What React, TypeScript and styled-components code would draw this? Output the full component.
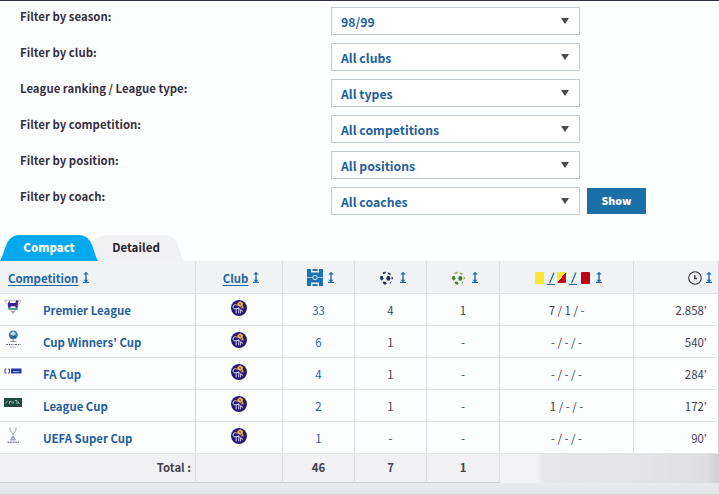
import styled, { createGlobalStyle, css } from "styled-components";

const GlobalStyle = createGlobalStyle`
  * {
    box-sizing: border-box;
  }
  body {
    margin: 0;
    background: #fdfeff;
    font-family: "Noto Sans CJK SC", "Noto Sans CJK JP", "Open Sans", sans-serif;
    font-size: 11.4px;
    color: #443f4e;
    overflow: hidden;
  }
`;

const Page = styled.div`
  width: 719px;
  height: 495px;
  border-top: 1px solid #33303f;
  background: #fdfeff;
  overflow: hidden;
`;

const Filters = styled.form`
  height: 234px;
  padding: 6px 0 0 20px;
`;

const FilterRow = styled.div`
  display: flex;
  height: 36px;
`;

const Label = styled.label`
  width: 311px;
  height: 18px;
  line-height: 18px;
  color: #35303f;
  font-size: 11.4px;
  font-weight: 700;
  white-space: nowrap;
`;

const Select = styled.div`
  display: flex;
  align-items: center;
  justify-content: space-between;
  width: 249px;
  height: 28px;
  padding: 1px 10px 0 9px;
  border: 1px solid #c3cdd5;
  background: #fff;
  color: #1d5f9e;
  font-size: 12.25px;
  font-weight: 700;
  line-height: 26px;
`;

const Arrow = styled.span`
  width: 0;
  height: 0;
  margin-top: -2px;
  border: 4px solid transparent;
  border-top: 6px solid #4a464c;
  border-bottom: 0;
`;

const ShowButton = styled.button`
  width: 59px;
  height: 26px;
  margin: 1px 0 0 7px;
  padding: 0 0 1px;
  border: 0;
  background: #1a70a6;
  color: #fff;
  font: 900 10.6px/26px "Noto Sans CJK SC", sans-serif;
`;

const Tabs = styled.div`
  display: flex;
  height: 26px;
`;

const Tab = styled.div<{ $active?: boolean }>`
  height: 26px;
  font-size: 11.6px;
  font-weight: 700;
  line-height: 25px;
  text-align: center;
  ${({ $active }) =>
    $active
      ? css`
          z-index: 1;
          width: 98px;
          background: #02a9ef;
          color: #fff;
          font-size: 11.4px;
          font-weight: 900;
          clip-path: path("M0 26C4 19 5 10 9 5Q13 0 19 0H79Q86 0 90 6C94 12 94 19 98 26Z");
        `
      : css`
          width: 96px;
          margin-left: -10px;
          background: #f1f1f3;
          color: #28242e;
          clip-path: path("M0 26V10Q9 0 19 0H76Q84 0 88 6C92 12 92 20 96 26Z");
        `}
`;

const Table = styled.div`
  border-bottom: 1px solid #c9cfd5;
`;

const rowTones = {
  head: css`
    height: 33px;
    background: #f1f2f4;
    border-bottom: 1px solid #dfe1e5;
  `,
  body: css`
    height: 32px;
    background: #fdfeff;
    border-bottom: 1px solid #e1e4e9;
  `,
  total: css`
    height: 28px;
    background: #f1f1f3;
    font-weight: 700;
    color: #45414d;
  `,
};

const Row = styled.div<{ $tone: keyof typeof rowTones }>`
  display: grid;
  grid-template-columns: 196px 87px 72px 72px 73px 134px 85px;
  ${({ $tone }) => rowTones[$tone]}
`;

const Cell = styled.div<{ $align?: "start" | "end"; $link?: boolean }>`
  display: flex;
  align-items: center;
  justify-content: ${({ $align }) => $align ?? "center"};
  border-right: 1px solid #d9dde4;
  white-space: nowrap;
  ${({ $link }) => $link && "color: #1d5f9e;"}
  ${({ $align }) => $align === "end" && "padding-right: 4px;"}
  &:last-child {
    padding-right: 11px;
    border-right-color: #d8cdd3;
  }
`;

const BadgeCell = styled(Cell)`
  padding-bottom: 4px;
`;

const TotalCell = styled(Cell)`
  padding-bottom: 3px;
`;

const HeadCell = styled(Cell)<{ $gap?: number }>`
  gap: ${({ $gap }) => $gap ?? 5}px;
  padding-top: 1px;
  padding-left: ${({ $align }) => ($align === "start" ? 8 : 4)}px;
  color: #1d65a6;
  font-weight: 700;
  &:last-child {
    padding-right: 6px;
  }
`;

const SortLink = styled.span`
  line-height: 16px;
  text-decoration: underline;
  text-decoration-thickness: 1px;
  text-underline-offset: 2px;
  text-decoration-skip-ink: none;
`;

const CrestSlot = styled.div`
  width: 43px;
  height: 31px;
  padding: 4px 0 0 4px;
`;

const CompName = styled.span`
  color: #1d5f9e;
  font-weight: 700;
`;

const Smear = styled(Cell)`
  grid-column: 6 / 8;
  height: 29px;
  border: 0;
  background: linear-gradient(90deg, #f3f3f5 0 37px, #e7e7e9 43px, #e4e4e6 130px, #e0e0e2 190px, #dddddf 208px, #cfcfd2 219px);
`;

const Bottom = styled.div`
  height: 12px;
  background: linear-gradient(#e9eaed, #e5e6e9);
  border-bottom: 1px solid #d3d6db;
`;

const Cards = styled.div`
  display: flex;
  align-items: center;
`;

const SlashIcon = styled.svg`
  margin: 2px 1px 0 3px;
`;

const Card = styled.span<{ $fill: string }>`
  width: 9px;
  height: 12px;
  border-radius: 1px;
  background: ${({ $fill }) => $fill};
`;

const SecondCard = styled(Card)`
  height: 11px;
`;

const RedCard = styled(Card)`
  margin-left: 2px;
`;

const Slash = () => (
  <SlashIcon width="9" height="13" viewBox="0 0 9 13" fill="none" stroke="#1d65a6">
    <path d="M2.5 11.5L7 .5M0 12.5h8" strokeWidth="1.2" />
  </SlashIcon>
);

const SortIcon = () => (
  <svg width="6" height="11" viewBox="0 0 6 11">
    <path d="M3 .5v10M0 10.4h6" fill="none" stroke="#1d6cb0" strokeWidth="1.4" />
    <path d="M3 0l2.8 2.5H.2zM3 10l2.6-2.3H.4z" fill="#1d6cb0" />
  </svg>
);

const PitchIcon = () => (
  <svg width="16" height="17" viewBox="0 0 16 17">
    <path fill="#1a73b2" d="M0 0h4v3.5h8V0h4v17h-4v-3.5H4V17H0z" />
    <path fill="#1a73b2" d="M5.5 0h5v2h-5zM5.5 15h5v2h-5z" />
    <path d="M0 8.5h16" stroke="#b9d6ea" strokeWidth=".8" />
    <circle cx="8" cy="8.5" r="2.2" fill="#1a73b2" stroke="#dceaf4" />
  </svg>
);

const BallIcon = ({ main, side }: { main: string; side: string }) => (
  <svg width="13" height="14" viewBox="0 0 13 14">
    <path fill={side} d="M2.6 1.6L6 .6l-.6 1.8-2.4.8zM7.8 1.2l3 1.4-.2 1.5-2.6-1.2z" />
    <path fill={main} d="M.3 5.3L2.7 5l.9 2.8-1.9 2L.1 8zM7 5.2l2.4-.2 1.2 2.2-1.2 2.6-2.4-.4-.8-2z" />
    <path fill={side} d="M12 5l.9 2.2-1 1.8-.4-2z" />
    <path fill={main} d="M2.6 10.8l3-.1 1.2 2-1.6 1-1.8-.8zM9.3 12.2l2.1-1.9-.6 2.2z" />
  </svg>
);

const ClockIcon = () => (
  <svg width="14" height="14" viewBox="0 0 14 14" fill="none" stroke="#35323a">
    <circle cx="7" cy="7" r="6.3" strokeWidth="1.1" />
    <path d="M6.8 4v3.5H9" strokeWidth="1.3" />
  </svg>
);

const ClubBadge = () => (
  <svg width="16" height="16" viewBox="0 0 16 16">
    <circle cx="8" cy="8" r="8" fill="#261b78" />
    <path d="M6 4l1.5-2 2.3-.8L12 3l-.2 2.2.9 3.3-2.3-.3L9 6.4l-2.6-.3z" fill="#d3ad4b" />
    <path d="M5.8 5C3.8 4 1.8 5.2 2 7.2c.2 1.7 1.8 1.9 2.9 1.4M5.2 13.3V8.5h2.6v5M7 7.5l2.6 2.4v3.4M9.8 9.5l2.2 2.2" fill="none" stroke="#d9d2e8" />
    <path d="M8.3 3.5l1.5 1M9.5 6l1.3 1" stroke="#6b5335" />
  </svg>
);

const PremierCrest = () => (
  <svg width="18" height="17" viewBox="0 -1 18 17">
    <path d="M.7 1.3h16.6L9 14.6z" fill="#fff" stroke="#c2b9cd" />
    <path d="M4 4l1.8-2.5V4h5.5l1-3L15 2.5l-1.3 1.3v4.9h-2L11 7.2H7l-.8 1.5H4.2z" fill="#3b2393" />
    <path d="M3.8 9h10.5l-1.2 2H5z" fill="#4d9d9a" />
    <path d="M6.5 12h5L9 14.5z" fill="#b29cac" />
  </svg>
);

const WinnersCrest = () => (
  <svg width="18" height="19" viewBox="0 0 18 19">
    <circle cx="9.3" cy="5" r="4.5" fill="#3f7fa6" />
    <path d="M6.5 3l3-1.5L12 4 9.5 5.5 7 4.7z" fill="#c6e1e9" />
    <path d="M7 7.5l3-1 2 1" stroke="#22486f" fill="none" />
    <path d="M9.3 9.5v2M6.5 11.5h6" stroke="#8e93a6" />
    <path d="M2 14.5h14.5" stroke="#6b6880" strokeWidth="1.2" strokeDasharray="2 1 1 .5" />
    <path d="M6 17h6" stroke="#b9b8c4" />
  </svg>
);

const FaCrest = () => (
  <svg width="18" height="7" viewBox="0 0 18 7">
    <path d="M2.5 1H1v4h1.5M4 1h1.5v4H4" stroke="#4140a4" fill="none" />
    <path d="M7 .5h10.5v5H7z" fill="#2735a0" />
    <path d="M9 3.7h6" stroke="#a9b0df" />
  </svg>
);

const LeagueCrest = () => (
  <svg width="18" height="9" viewBox="0 0 18 9">
    <path d="M0 0h18v9H0z" fill="#204a42" />
    <path d="M1.5 5l2-1.5M5 6l1-3 2 1.5M9 3v3M11 2.5h2V6M14 4l1.5 2" stroke="#a8beb5" fill="none" />
  </svg>
);

const SuperCrest = () => (
  <svg width="18" height="18" viewBox="0 -1 18 18" fill="none">
    <path d="M6.2.5C5.6 3 7 5 8.6 6.3M12 .5C12.5 3 11 5 9.6 6.3" stroke="#a5a5b3" />
    <path d="M9 6v5M7.5 11c0-2 3-2 3 0l1 2h-5z" fill="#b5bdd1" stroke="#9aa0b5" />
    <path d="M3.5 15.2h11.5" stroke="#53546f" strokeDasharray="2 .6" />
  </svg>
);

const filters = [
  { label: "Filter by season:", value: "98/99" },
  { label: "Filter by club:", value: "All clubs" },
  { label: "League ranking / League type:", value: "All types" },
  { label: "Filter by competition:", value: "All competitions" },
  { label: "Filter by position:", value: "All positions" },
  { label: "Filter by coach:", value: "All coaches" },
];

const rows = [
  { name: "Premier League", Crest: PremierCrest, games: 33, goals: "4", assists: "1", cards: "7 / 1 / -", minutes: "2.858'" },
  { name: "Cup Winners' Cup", Crest: WinnersCrest, games: 6, goals: "1", assists: "-", cards: "- / - / -", minutes: "540'" },
  { name: "FA Cup", Crest: FaCrest, games: 4, goals: "1", assists: "-", cards: "- / - / -", minutes: "284'" },
  { name: "League Cup", Crest: LeagueCrest, games: 2, goals: "1", assists: "-", cards: "1 / - / -", minutes: "172'" },
  { name: "UEFA Super Cup", Crest: SuperCrest, games: 1, goals: "-", assists: "-", cards: "- / - / -", minutes: "90'" },
];

function App() {
  return (
    <>
      <GlobalStyle />
      <Page>
        <Filters>
          {filters.map(({ label, value }, i) => (
            <FilterRow key={label}>
              <Label>{label}</Label>
              <Select>
                {value}
                <Arrow />
              </Select>
              {i === filters.length - 1 && <ShowButton type="button">Show</ShowButton>}
            </FilterRow>
          ))}
        </Filters>
        <Tabs>
          <Tab $active>Compact</Tab>
          <Tab>Detailed</Tab>
        </Tabs>
        <Table>
          <Row $tone="head">
            <HeadCell $align="start">
              <SortLink>Competition</SortLink>
              <SortIcon />
            </HeadCell>
            <HeadCell>
              <SortLink>Club</SortLink>
              <SortIcon />
            </HeadCell>
            <HeadCell>
              <PitchIcon />
              <SortIcon />
            </HeadCell>
            <HeadCell $gap={7}>
              <BallIcon main="#1f2c5c" side="#1f2c5c" />
              <SortIcon />
            </HeadCell>
            <HeadCell $gap={7}>
              <BallIcon main="#3f7d2b" side="#8fae3c" />
              <SortIcon />
            </HeadCell>
            <HeadCell $gap={6}>
              <Cards>
                <Card $fill="#fde534" />
                <Slash />
                <SecondCard $fill="linear-gradient(to bottom right, #fde534 50%, #c00716 51%)" />
                <Slash />
                <RedCard $fill="#bf0414" />
              </Cards>
              <SortIcon />
            </HeadCell>
            <HeadCell $align="end" $gap={4}>
              <ClockIcon />
              <SortIcon />
            </HeadCell>
          </Row>
          {rows.map(({ name, Crest, games, goals, assists, cards, minutes }) => (
            <Row $tone="body" key={name}>
              <Cell $align="start">
                <CrestSlot>
                  <Crest />
                </CrestSlot>
                <CompName>{name}</CompName>
              </Cell>
              <BadgeCell>
                <ClubBadge />
              </BadgeCell>
              <Cell $link>{games}</Cell>
              <Cell>{goals}</Cell>
              <Cell>{assists}</Cell>
              <Cell>{cards}</Cell>
              <Cell $align="end">{minutes}</Cell>
            </Row>
          ))}
          <Row $tone="total">
            <TotalCell $align="end">Total :</TotalCell>
            <TotalCell />
            <TotalCell>46</TotalCell>
            <TotalCell>7</TotalCell>
            <TotalCell>1</TotalCell>
            <Smear />
          </Row>
        </Table>
        <Bottom />
      </Page>
    </>
  );
}

export default App;
